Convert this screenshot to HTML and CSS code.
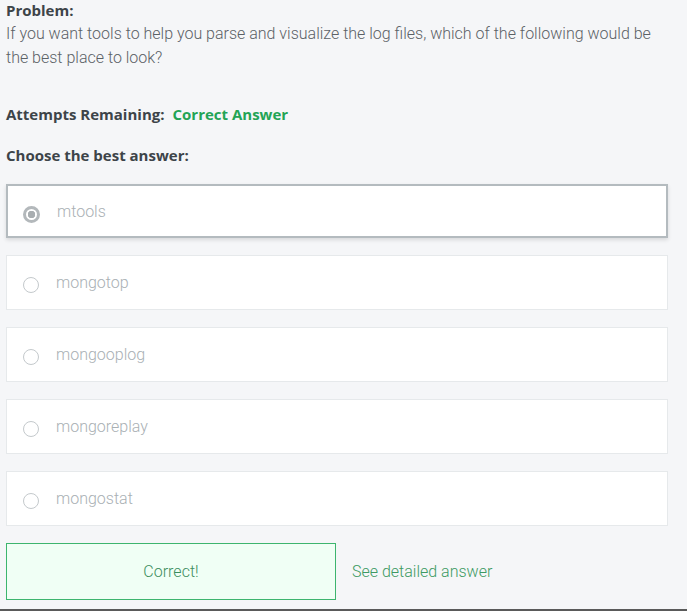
FILE: index.html
```html
<!DOCTYPE html>
<html>
<head>
<meta charset="utf-8">
<link rel="stylesheet" href="styles.css">
</head>
<body>
<div class="page">
  <div class="problem">
    <div class="label">Problem:</div>
    <p class="question">If you want tools to help you parse and visualize the log files, which of the following would be the best place to look?</p>
  </div>
  <div class="attempts"><span class="label">Attempts Remaining:</span><span class="status">Correct Answer</span></div>
  <div class="label choose">Choose the best answer:</div>
  <div class="options">
    <div class="option selected"><span class="radio"></span><span class="opt-text">mtools</span></div>
    <div class="option"><span class="radio"></span><span class="opt-text">mongotop</span></div>
    <div class="option"><span class="radio"></span><span class="opt-text">mongooplog</span></div>
    <div class="option"><span class="radio"></span><span class="opt-text">mongoreplay</span></div>
    <div class="option"><span class="radio"></span><span class="opt-text">mongostat</span></div>
  </div>
  <div class="actions">
    <div class="result">Correct!</div>
    <a class="detail">See detailed answer</a>
  </div>
</div>
</body>
</html>
```

FILE: styles.css
```css
html, body {
  margin: 0;
  padding: 0;
  background: #f5f6f8;
  height: 611px;
  overflow: hidden;
}
.page {
  box-sizing: border-box;
  height: 611px;
  padding: 0 19px 0 6px;
  border-bottom: 2px solid #5a5a5a;
  font-family: Roboto, "Liberation Sans", sans-serif;
}
.label {
  font-family: "Open Sans", "Liberation Sans", sans-serif;
  font-weight: 700;
  font-size: 15px;
  color: #3d4449;
  line-height: 20px;
}
.question {
  margin: 2px 0 0;
  font-size: 16px;
  font-weight: 300;
  line-height: 24px;
  color: #5b6166;
}
.attempts {
  margin-top: 34px;
  display: flex;
  gap: 8px;
  line-height: 20px;
}
.status {
  font-family: "Open Sans", "Liberation Sans", sans-serif;
  font-weight: 700;
  font-size: 15px;
  color: #23a455;
}
.choose {
  margin-top: 21px;
}
.options {
  margin-top: 19px;
  display: flex;
  flex-direction: column;
  gap: 17px;
}
.option {
  box-sizing: border-box;
  height: 55px;
  background: #fff;
  border: 1px solid #e6e9eb;
  display: flex;
  align-items: center;
  padding-left: 16px;
  gap: 17px;
}
.option.selected {
  height: 54px;
  border: 2px solid #b4bbbf;
  box-shadow: 0 2px 4px rgba(0,0,0,0.12);
  padding-left: 15px;
}
.radio {
  box-sizing: border-box;
  width: 16px;
  height: 16px;
  border-radius: 50%;
  border: 1px solid #c4c9cc;
  margin-top: 5px;
  flex: none;
}
.selected .radio {
  width: 17px;
  height: 17px;
  border: 3px solid #b3b8bb;
  background: radial-gradient(circle, #a9aeb1 0 3.5px, #fff 4px);
  margin-top: 6px;
}
.opt-text {
  font-size: 16px;
  font-weight: 300;
  color: #a9b0b4;
}
.actions {
  margin-top: 17px;
  display: flex;
  align-items: center;
  gap: 16px;
}
.result {
  box-sizing: border-box;
  width: 330px;
  height: 57px;
  border: 1px solid #3db56e;
  background: #f0fff5;
  display: flex;
  align-items: center;
  justify-content: center;
  font-size: 16px;
  font-weight: 300;
  color: #3c8e5e;
}
.detail {
  font-size: 16px;
  font-weight: 300;
  color: #3c9a63;
}
```
